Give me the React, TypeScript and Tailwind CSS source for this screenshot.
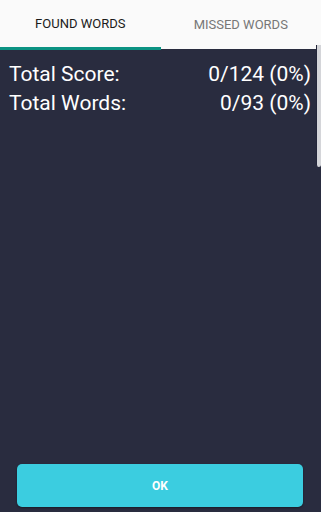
import React from 'react';

export default function App() {
  return (
    <div
      className="w-[321px] h-[512px] flex flex-col bg-[#292c3f] overflow-hidden"
      style={{ fontFamily: 'Roboto, "Liberation Sans", sans-serif' }}
    >
      {/* Tabs */}
      <div className="h-[50px] flex bg-[#fafafa] shrink-0">
        <div className="flex-1 flex flex-col">
          <div className="flex-1 flex items-center justify-center text-[13px] font-normal text-[#1a1a1a]">
            FOUND WORDS
          </div>
          <div className="h-[3px] bg-[#0c9383]" />
        </div>
        <div className="flex-1 flex flex-col">
          <div className="flex-1 flex items-center justify-center text-[13px] font-normal text-[#777777]">
            MISSED WORDS
          </div>
          <div className="h-[1px] bg-[#292c3f]" />
        </div>
      </div>

      {/* Body */}
      <div className="flex-1 flex relative">
        <div className="flex-1 flex flex-col pl-[9px] pr-[10px] pt-[10px]">
          <div className="flex justify-between text-white text-[21px] leading-[29px]">
            <span>Total Score:</span>
            <span>0/124 (0%)</span>
          </div>
          <div className="flex justify-between text-white text-[21px] leading-[29px]">
            <span>Total Words:</span>
            <span>0/93 (0%)</span>
          </div>
          <div className="flex-1" />
          <div className="pl-[8px] pr-[8px] pb-[5px]">
            <button className="w-full h-[43px] rounded-[5px] bg-[#3bcde0] text-white text-[12px] font-bold shadow-[0_1px_2px_rgba(0,0,0,0.4)] pt-[1px]">
              OK
            </button>
          </div>
        </div>
        {/* scrollbar */}
        <div className="absolute right-0 top-[-5px] w-[5px] h-[122px] bg-[#d4d5d9] rounded-b-[3px] border-l border-[#23263a]" />
      </div>
    </div>
  );
}
